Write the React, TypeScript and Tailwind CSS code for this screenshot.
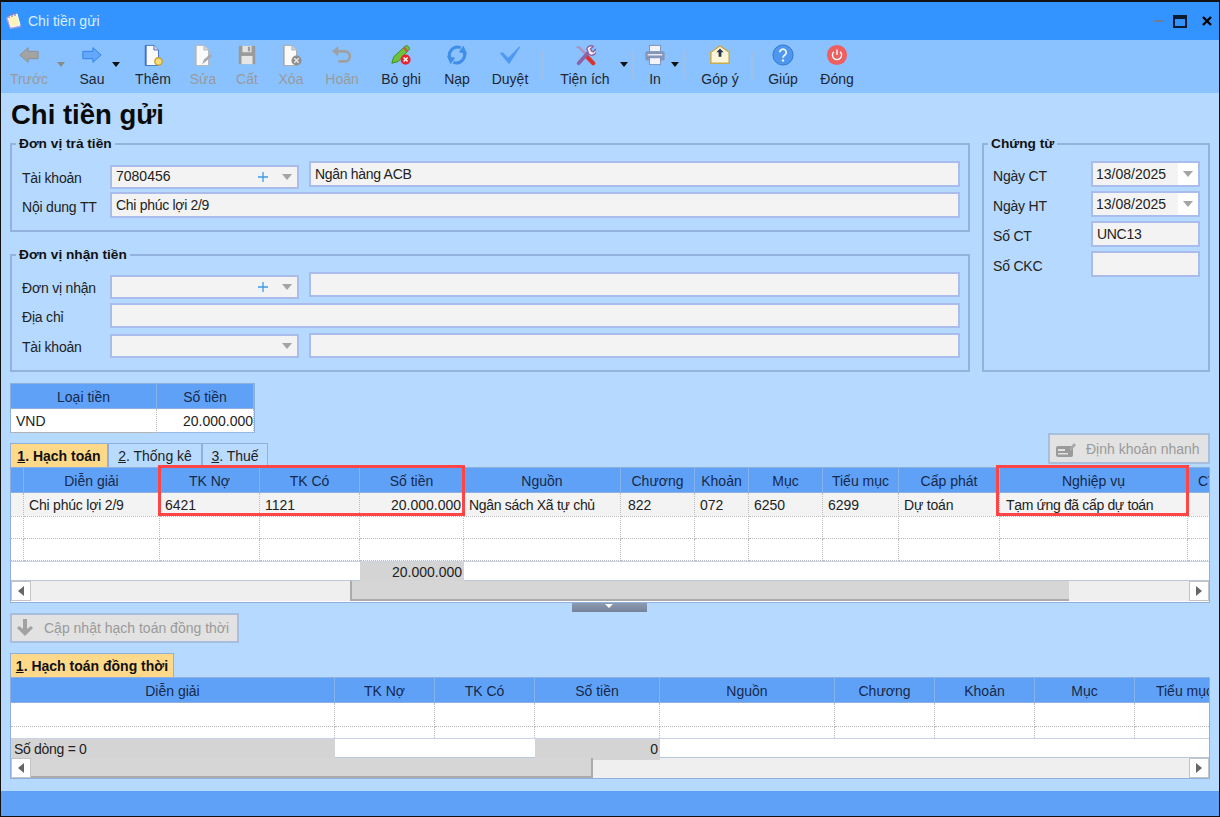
import type { ReactNode } from 'react';

const G1_COLS = 'grid grid-cols-[13px_136px_100px_100px_104px_157px_74px_54px_74px_76px_101px_188px_50px]';
const G2_COLS = 'grid grid-cols-[324px_100px_100px_125px_175px_100px_100px_100px_100px]';
const CUR_COLS = 'grid grid-cols-[146px_97px]';

const Back = ({ fill, stroke, flip }: { fill: string; stroke: string; flip?: boolean }) => (
  <svg viewBox="0 0 24 24" className={flip ? '-scale-x-100' : ''}>
    <polygon points="2,12 11,4 11,8 22,8 22,16 11,16 11,20" fill={fill} stroke={stroke} strokeWidth="1" />
  </svg>
);

const Doc = ({ edge, children }: { edge: string; children?: ReactNode }) => (
  <svg viewBox="0 0 24 24">
    <path d="M4 1.5h9l5 5v17H4z" fill="#fafafa" stroke={edge} strokeWidth="1" />
    <path d="M4 1.5v22" stroke={edge} strokeWidth="2" />
    <path d="M13 1.5v5h5" fill="#d8d8d8" stroke={edge} strokeWidth="1" />
    {children}
  </svg>
);

const icons: Record<string, ReactNode> = {
  back: <Back fill="#a3a3a3" stroke="#8d8d8d" />,
  forward: <Back fill="#63a8fb" stroke="#2f80e8" flip />,
  add: (
    <Doc edge="#3f6fc8">
      <circle cx="18" cy="19" r="4" fill="#f7dc7a" stroke="#c6a12c" strokeWidth="1.5" />
    </Doc>
  ),
  edit: (
    <Doc edge="#b4b4b4">
      <path d="M11 22l2-5 7-6 2 2-7 6z" fill="#a9a9a9" />
    </Doc>
  ),
  save: (
    <svg viewBox="0 0 24 24">
      <rect x="3" y="2" width="18" height="20" fill="#9a9a9a" />
      <rect x="7" y="2" width="10" height="7" fill="#e2e2e2" />
      <rect x="13" y="3" width="2.5" height="5" fill="#9a9a9a" />
      <rect x="6" y="13" width="12" height="9" fill="#e6e6e6" />
    </svg>
  ),
  del: (
    <Doc edge="#a8a8a8">
      <circle cx="18" cy="18" r="5.5" fill="#8f8f8f" />
      <path d="M15.6 15.6l4.8 4.8M20.4 15.6l-4.8 4.8" stroke="#e8e8e8" strokeWidth="1.5" />
    </Doc>
  ),
  undo: (
    <svg viewBox="0 0 24 24">
      <path d="M4 8h11a5 5 0 0 1 0 11H8" fill="none" stroke="#a0a0a0" strokeWidth="3" />
      <polygon points="1,8 8,2.5 8,13.5" fill="#a0a0a0" />
    </svg>
  ),
  unpost: (
    <svg viewBox="0 0 24 24">
      <path d="M2 21l2-7L17 2c2-1 5 2 4 4L9 19z" fill="#6ec13a" stroke="#3f8a1e" strokeWidth="1" />
      <path d="M15 4l4 4" stroke="#d84848" strokeWidth="2" />
      <circle cx="17" cy="17" r="5.5" fill="#e8242c" />
      <path d="M14.8 14.8l4.4 4.400M19.2 14.8l-4.4 4.400" stroke="#fff" strokeWidth="1.6" />
    </svg>
  ),
  reload: (
    <svg viewBox="0 0 24 24">
      <path d="M16 4A9 9 0 0 0 5 17" fill="none" stroke="#3f8ee8" strokeWidth="3.4" />
      <polygon points="1,13 10,15 5,22" fill="#3f8ee8" />
      <path d="M8 20A9 9 0 0 0 19 7" fill="none" stroke="#3f8ee8" strokeWidth="3.4" />
      <polygon points="23,11 14,9 19,2" fill="#3f8ee8" />
    </svg>
  ),
  check: (
    <svg viewBox="0 0 24 24">
      <path d="M1 10l3-1 6 6L22 3h1.500L11 22z" fill="#4f98f4" />
    </svg>
  ),
  tools: (
    <svg viewBox="0 0 24 24">
      <path d="M3 3l3 1 13 13" fill="none" stroke="#b08fc0" strokeWidth="2.5" />
      <path d="M14 14l7 7" stroke="#d9342f" strokeWidth="4.5" strokeLinecap="round" />
      <path d="M5 21L16 9" stroke="#8a63a8" strokeWidth="4" strokeLinecap="round" />
      <path d="M14 5a5 5 0 0 1 7-2.500l-3 3 1 2 2 1 3-3A5 5 0 0 1 16 11z" fill="#f4eef8" stroke="#8a63a8" strokeWidth="1.5" />
    </svg>
  ),
  print: (
    <svg viewBox="0 0 24 24">
      <rect x="6" y="1.500" width="12" height="7" fill="#f2f4fa" stroke="#7f8fb5" strokeWidth="1" />
      <rect x="1.500" y="8" width="21" height="10" rx="2" fill="#8595bc" />
      <rect x="4" y="11" width="16" height="1.500" fill="#eef1f8" />
      <rect x="6" y="15" width="12" height="7.500" fill="#f2f4fa" stroke="#7f8fb5" strokeWidth="1" />
    </svg>
  ),
  mail: (
    <svg viewBox="0 0 24 24">
      <path d="M2 9l10-7 10 7v12H2z" fill="#fdf6d8" stroke="#c8aa52" strokeWidth="1.600" />
      <path d="M12 5l4 4h-2.500v5h-3V9H8z" fill="#27384f" />
    </svg>
  ),
  help: (
    <svg viewBox="0 0 24 24">
      <circle cx="12" cy="12" r="11" fill="#4f97ee" stroke="#2e74cc" strokeWidth="1" />
      <path d="M8.500 9a3.500 3.500 0 1 1 5.500 3c-1.400 1-2 1.500-2 3" fill="none" stroke="#eaf3ff" strokeWidth="2" />
      <circle cx="12" cy="18" r="1.300" fill="#eaf3ff" />
    </svg>
  ),
  close: (
    <svg viewBox="0 0 24 24">
      <circle cx="12" cy="12" r="11" fill="#ee5f5f" />
      <path d="M8.500 8.500a5 5 0 1 0 7 0M12 6v6" fill="none" stroke="#fff" strokeWidth="1.500" />
    </svg>
  ),
};

const Caret = ({ className, dim }: { className: string; dim?: boolean }) => (
  <div className={`flex h-[6px] mt-[22px] shrink-0 justify-center ${className}`}>
    <svg width="8" height="5" viewBox="0 0 8 5">
      <polygon points="0,0 8,0 4,5" fill={dim ? '#8a8a8a' : '#111'} />
    </svg>
  </div>
);

const Sep = ({ className }: { className: string }) => (
  <div className={`w-[2px] h-[30px] mt-[10px] shrink-0 bg-[#9fbfe6] ${className}`} />
);

function Tool({ label, icon, className, off }: { label: string; icon: string; className: string; off?: boolean }) {
  return (
    <div className={`flex flex-col items-center shrink-0 pt-[4px] ${className}`}>
      <div className="w-[22px] h-[22px]">{icons[icon]}</div>
      <div className={`mt-[3px] text-[14px] leading-[20px] whitespace-nowrap ${off ? 'text-[#9a9a9a]' : 'text-[#1c2635]'}`}>{label}</div>
    </div>
  );
}

function Toolbar() {
  return (
    <div className="flex h-[53px] pl-[5px] bg-[#8ac2ff]">
      <Tool label="Trước" icon="back" off className="w-[46px]" />
      <Caret dim className="w-[18px]" />
      <Tool label="Sau" icon="forward" className="w-[44px]" />
      <Caret className="w-[8px] -ml-[2px]" />
      <Tool label="Thêm" icon="add" className="w-[66px]" />
      <Tool label="Sửa" icon="edit" off className="w-[34px]" />
      <Tool label="Cất" icon="save" off className="w-[54px]" />
      <Tool label="Xóa" icon="del" off className="w-[34px]" />
      <Tool label="Hoãn" icon="undo" off className="w-[68px]" />
      <Tool label="Bỏ ghi" icon="unpost" className="w-[50px]" />
      <Tool label="Nạp" icon="reload" className="w-[62px]" />
      <Tool label="Duyệt" icon="check" className="w-[44px]" />
      <Sep className="ml-[9px] mr-[14px]" />
      <Tool label="Tiện ích" icon="tools" className="w-[56px]" />
      <Caret className="w-[8px] ml-[7px]" />
      <Sep className="ml-[4px]" />
      <Tool label="In" icon="print" className="w-[20px] ml-[11px]" />
      <Caret className="w-[8px] ml-[6px]" />
      <Sep className="ml-[4px]" />
      <Tool label="Góp ý" icon="mail" className="w-[40px] ml-[15px]" />
      <Sep className="ml-[11px]" />
      <Tool label="Giúp" icon="help" className="w-[34px] ml-[13px]" />
      <Tool label="Đóng" icon="close" className="w-[44px] ml-[15px]" />
    </div>
  );
}

const Arrow = () => (
  <svg width="10" height="6" viewBox="0 0 10 6">
    <polygon points="0,0 10,0 5,6" fill="#a4a4a4" />
  </svg>
);

const Plus = () => (
  <svg width="10" height="10" viewBox="0 0 10 10">
    <path d="M5 0v10M0 5h10" stroke="#3d9be8" strokeWidth="1.300" />
  </svg>
);

function Field({ text, className }: { text?: string; className: string }) {
  return (
    <div className={`flex items-center border-2 border-[#a9bcec] bg-[#f3f3f3] pl-[4px] pt-[1px] text-[14px] tracking-[-0.3px] text-[#222] ${className}`}>
      {text}
    </div>
  );
}

function Combo({ text, plus }: { text?: string; plus?: boolean }) {
  return (
    <div className="flex items-center w-[189px] h-[24px] border-2 border-[#a9bcec] bg-[#f3f3f3] pl-[4px] text-[14px] text-[#222]">
      <span className="flex-1">{text}</span>
      {plus && (
        <span className="flex translate-x-[1px]">
          <Plus />
        </span>
      )}
      <span className="ml-[15px] mr-[5px] flex">
        <Arrow />
      </span>
    </div>
  );
}

function DateField({ text }: { text: string }) {
  return (
    <div className="flex w-[109px] h-[26px] border-2 border-[#a9bcec] bg-white text-[14px] text-[#222]">
      <span className="flex items-center flex-1 bg-[#f3f3f3] pl-[3px] pt-[1px]">{text}</span>
      <span className="flex items-center justify-center w-[20px]">
        <Arrow />
      </span>
    </div>
  );
}

function Group({ title, className, children }: { title: string; className: string; children: ReactNode }) {
  return (
    <fieldset className={`border-2 border-[#93b3de] ${className}`}>
      <legend className="ml-[4px] px-[3px] text-[13.7px] leading-[16px] font-bold text-[#111]">{title}</legend>
      {children}
    </fieldset>
  );
}

function Row({ label, wide, className, children }: { label: string; wide?: boolean; className?: string; children: ReactNode }) {
  return (
    <div className={`flex items-center ${className ?? ''}`}>
      <div className={`pt-[4px] text-[14px] tracking-[-0.2px] text-[#222] ${wide ? 'w-[98px]' : 'w-[88px]'}`}>{label}</div>
      {children}
    </div>
  );
}

function Forms() {
  return (
    <div className="flex gap-[12px]">
      <div className="flex flex-col w-[960px] gap-[15px]">
        <Group title="Đơn vị trả tiền" className="h-[96px]">
          <div className="pt-[12px] pl-[10px] pr-[8px]">
            <Row label="Tài khoản">
              <Combo text="7080456" plus />
              <Field text="Ngân hàng ACB" className="w-[651px] h-[26px] ml-[10px] self-start -mt-[3px]" />
            </Row>
            <Row label="Nội dung TT" className="mt-[3px]">
              <Field text="Chi phúc lợi 2/9" className="w-[850px] h-[26px]" />
            </Row>
          </div>
        </Group>
        <Group title="Đơn vị nhận tiền" className="h-[125px]">
          <div className="pt-[11px] pl-[10px] pr-[8px]">
            <Row label="Đơn vị nhận">
              <Combo plus />
              <Field className="w-[651px] h-[25px] ml-[10px] self-start -mt-[2px]" />
            </Row>
            <Row label="Địa chỉ" className="mt-[4px]">
              <Field className="w-[850px] h-[25px]" />
            </Row>
            <Row label="Tài khoản" className="mt-[5px]">
              <Combo />
              <Field className="w-[651px] h-[25px] ml-[10px]" />
            </Row>
          </div>
        </Group>
      </div>
      <Group title="Chứng từ" className="w-[228px] h-[236px]">
        <div className="flex flex-col gap-[4px] pt-[9px] pl-[9px]">
          <Row wide label="Ngày CT">
            <DateField text="13/08/2025" />
          </Row>
          <Row wide label="Ngày HT">
            <DateField text="13/08/2025" />
          </Row>
          <Row wide label="Số CT">
            <Field text="UNC13" className="w-[109px] h-[26px]" />
          </Row>
          <Row wide label="Số CKC">
            <Field className="w-[109px] h-[26px]" />
          </Row>
        </div>
      </Group>
    </div>
  );
}

const Head = ({ children, className }: { children?: ReactNode; className?: string }) => (
  <div className={`flex items-center justify-center pt-[2px] whitespace-nowrap border-r border-b border-r-[#86b4ee] border-b-[#8fb0dc] bg-[#60a1f8] text-[14px] text-[#15294a] ${className ?? ''}`}>
    {children}
  </div>
);

const Cell = ({ children, className }: { children?: ReactNode; className?: string }) => (
  <div className={`flex items-center pt-[2px] whitespace-nowrap border-r border-b border-dotted border-[#bcbcbc] pl-[5px] text-[14px] text-[#222] ${className ?? ''}`}>
    {children}
  </div>
);

function Currency() {
  return (
    <div className="w-[245px] h-[50px] mt-[11px] border border-[#8fb0dc] bg-white">
      <div className={`${CUR_COLS} h-[25px]`}>
        <Head>Loại tiền</Head>
        <Head>Số tiền</Head>
      </div>
      <div className={`${CUR_COLS} h-[23px]`}>
        <Cell className="pl-[5px]">VND</Cell>
        <Cell className="justify-end pr-0">20.000.000</Cell>
      </div>
    </div>
  );
}

function Tab({ num, label, active, className }: { num: string; label: string; active?: boolean; className: string }) {
  return (
    <div
      className={`flex items-center justify-center h-[24px] pt-[2px] border border-b-0 border-[#8fb0dc] text-[14px] whitespace-pre ${
        active ? 'bg-[#ffd98a] font-bold text-[#111]' : 'bg-[#b9dbff] text-[#222]'
      } ${className}`}
    >
      <span className="underline">{num}</span>. {label}
    </div>
  );
}

const ScrollBtn = ({ dir }: { dir: 'left' | 'right' }) => (
  <div className="flex items-center justify-center w-[20px] h-full bg-white border border-[#c4c4c4] shrink-0">
    <svg width="6" height="10" viewBox="0 0 6 10">
      <polygon points={dir === 'left' ? '6,0 6,10 0,5' : '0,0 0,10 6,5'} fill="#666" />
    </svg>
  </div>
);

function Scrollbar({ lead, thumb }: { lead: string; thumb: string }) {
  return (
    <div className="flex h-[21px] border-t border-[#b9c7da] bg-[#efefef]">
      <ScrollBtn dir="left" />
      <div className={lead} />
      <div className={`h-full bg-[#d6d6d6] border-l-2 border-b-2 border-[#ababab] ${thumb}`} />
      <div className="flex-1" />
      <ScrollBtn dir="right" />
    </div>
  );
}

const GridButton = ({ icon, label, className }: { icon: ReactNode; label: string; className: string }) => (
  <div className={`flex items-center border-2 border-[#a8bedf] bg-[#e2e2e2] text-[14px] text-[#9a9a9a] whitespace-nowrap ${className}`}>
    {icon}
    {label}
  </div>
);

function MainGrid() {
  const heads = ['', 'Diễn giải', 'TK Nợ', 'TK Có', 'Số tiền', 'Nguồn', 'Chương', 'Khoản', 'Mục', 'Tiểu mục', 'Cấp phát', 'Nghiệp vụ'];
  const blank = [...heads, ''].map((_, i) => i);
  return (
    <div className="relative">
      <div className="h-[136px] border border-[#8fb0dc] bg-white overflow-hidden">
        <div className={`${G1_COLS} h-[25px]`}>
          {heads.map((h, i) => (
            <Head key={i}>{h}</Head>
          ))}
          <Head className="justify-start pl-[10px]">CTMT</Head>
        </div>
        <div className={`${G1_COLS} h-[23px] bg-[#f3f3f3]`}>
          <Cell />
          <Cell className="tracking-[-0.2px]">Chi phúc lợi 2/9</Cell>
          <Cell>6421</Cell>
          <Cell>1121</Cell>
          <Cell className="justify-end pr-[2px]">20.000.000</Cell>
          <Cell className="tracking-[-0.3px]">Ngân sách Xã tự chủ</Cell>
          <Cell className="pl-[7px]">822</Cell>
          <Cell>072</Cell>
          <Cell>6250</Cell>
          <Cell>6299</Cell>
          <Cell className="tracking-[-0.2px]">Dự toán</Cell>
          <Cell className="pl-[6px] tracking-[-0.35px]">Tạm ứng đã cấp dự toán</Cell>
          <Cell />
        </div>
        <div className={`${G1_COLS} h-[23px]`}>
          {blank.map((i) => (
            <Cell key={i} />
          ))}
        </div>
        <div className={`${G1_COLS} h-[22px]`}>
          {blank.map((i) => (
            <Cell key={i} />
          ))}
        </div>
        <div className={`${G1_COLS} h-[19px] border-t border-[#c8d4e6]`}>
          <div className="col-span-4" />
          <div className="flex items-center justify-end bg-[#d4d4d4] pr-[2px] text-[14px] text-[#222]">20.000.000</div>
        </div>
        <Scrollbar lead="w-[319px]" thumb="w-[719px]" />
      </div>
      <div className="absolute left-[148px] -top-[2px] w-[307px] h-[51px] border-[3px] border-[#ff4545]" />
      <div className="absolute left-[986px] -top-[2px] w-[193px] h-[51px] border-[3px] border-[#ff4545]" />
    </div>
  );
}

function SubGrid() {
  const heads = ['Diễn giải', 'TK Nợ', 'TK Có', 'Số tiền', 'Nguồn', 'Chương', 'Khoản', 'Mục', 'Tiểu mục'];
  return (
    <div className="h-[102px] border border-[#8fb0dc] bg-white overflow-hidden">
      <div className={`${G2_COLS} h-[25px]`}>
        {heads.map((h) => (
          <Head key={h}>{h}</Head>
        ))}
      </div>
      <div className={`${G2_COLS} h-[24px]`}>
        {heads.map((h) => (
          <Cell key={h} />
        ))}
      </div>
      <div className={`${G2_COLS} h-[11px]`}>
        {heads.map((h) => (
          <div key={h} className="border-r border-dotted border-[#bcbcbc]" />
        ))}
      </div>
      <div className={`${G2_COLS} h-[19px] border-t border-[#c8d4e6]`}>
        <div className="flex items-center bg-[#d4d4d4] pl-[3px] text-[14px] tracking-[-0.3px] text-[#222]">Số dòng = 0</div>
        <div className="col-span-2" />
        <div className="flex items-center justify-end bg-[#d4d4d4] pr-[2px] text-[14px] text-[#222]">0</div>
      </div>
      <div className="flex h-[21px] border-t border-[#b9c7da] bg-[#efefef]">
        <ScrollBtn dir="left" />
        <div className="h-full w-[562px] bg-[#d6d6d6] border-b-2 border-r-2 border-[#ababab]" />
        <div className="flex-1" />
        <ScrollBtn dir="right" />
      </div>
    </div>
  );
}

export default function App() {
  return (
    <div className="flex flex-col w-[1220px] h-[817px] border border-t-2 border-[#111] font-['Liberation_Sans',Arial,sans-serif] bg-[#b5d9ff] overflow-hidden">
      <div className="flex items-center h-[38px] pl-[4px] bg-[#3494ff]">
        <svg width="18" height="18" viewBox="0 0 18 18">
          <path d="M1 6l11-3 4 12-11 2z" fill="#b9a4d8" />
          <path d="M3 5l9-3 3 11-9 2z" fill="#fdf3b8" stroke="#fff" strokeWidth="1" />
          <path d="M4 2v4M7 1v4M10 1v3" stroke="#8c78b0" strokeWidth="1.200" />
        </svg>
        <span className="ml-[5px] text-[14px] text-[#dcecff]">Chi tiền gửi</span>
        <div className="flex-1" />
        <div className="w-[10px] h-[2px] bg-[#6b7f9a]" />
        <div className="w-[14px] h-[13px] ml-[9px] border-2 border-t-[4px] border-[#0d1b30]" />
        <svg width="10" height="10" viewBox="0 0 10 10" className="ml-[15px] mr-[7px]">
          <path d="M1 1l8 8M9 1l-8 8" stroke="#000" strokeWidth="2.400" />
        </svg>
      </div>
      <Toolbar />
      <div className="flex-1 flex flex-col px-[9px]">
        <h1 className="h-[43px] pl-[1px] pt-[4px] text-[27.5px] leading-[36px] font-bold text-[#0a0a0a]">Chi tiền gửi</h1>
        <Forms />
        <Currency />
        <div className="flex justify-between h-[34px] items-end">
          <div className="flex">
            <Tab num="1" label="Hạch toán" active className="w-[98px]" />
            <Tab num="2" label="Thống kê" className="w-[94px]" />
            <Tab num="3" label="Thuế" className="w-[66px]" />
          </div>
          <GridButton
            className="self-start w-[162px] h-[31px] pl-[5px] pt-[2px]"
            label="Định khoản nhanh"
            icon={
              <svg width="22" height="18" viewBox="0 0 22 18" className="mr-[9px]">
                <rect x="1" y="5" width="17" height="11" rx="2" fill="#9a9a9a" />
                <rect x="3" y="8" width="7" height="2" fill="#e2e2e2" />
                <rect x="3" y="12" width="10" height="1.500" fill="#e2e2e2" />
                <path d="M14 8l5-6 2 2-5 6z" fill="#a8a8a8" />
              </svg>
            }
          />
        </div>
        <MainGrid />
        <div className="flex items-center justify-center ml-[562px] w-[75px] h-[9px] bg-linear-to-b from-[#8d9ab0] to-[#75839a]">
          <svg width="8" height="4" viewBox="0 0 8 4" className="mb-[3px] -translate-x-[1px]">
            <polygon points="0,0 8,0 4,4" fill="#fff" />
          </svg>
        </div>
        <GridButton
          className="mt-[1px] w-[229px] h-[30px] pl-[3px]"
          label="Cập nhật hạch toán đồng thời"
          icon={
            <svg width="20" height="20" viewBox="0 0 20 20" className="mr-[9px]">
              <path d="M10 18L2 10l2-2 4 3V1h4v10l4-3 2 2z" fill="#a2a2a2" />
            </svg>
          }
        />
        <Tab num="1" label="Hạch toán đồng thời" active className="mt-[10px] w-[164px]" />
        <SubGrid />
      </div>
      <div className="h-[25px] bg-[#60a1f8]" />
    </div>
  );
}
